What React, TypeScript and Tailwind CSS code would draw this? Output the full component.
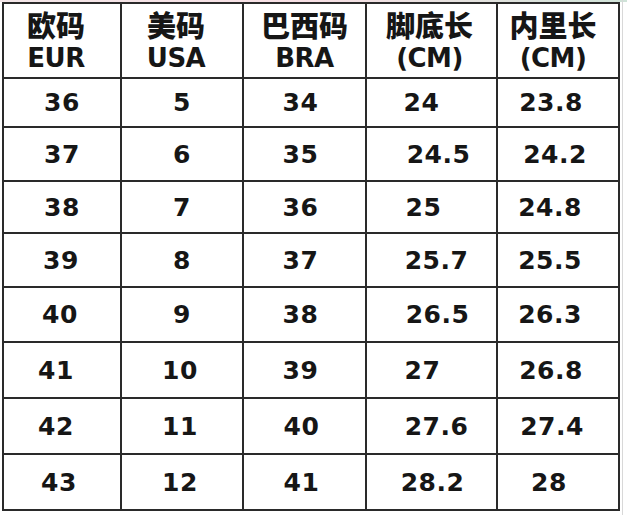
const headers: [string, string, string][] = [
  ["欧码", "EUR", "-translate-x-[6px]"],
  ["美码", "USA", "-translate-x-[6px]"],
  ["巴西码", "BRA", ""],
  ["脚底长", "(CM)", "-translate-x-[2px]"],
  ["内里长", "(CM)", "-translate-x-[5px]"],
];

const rows: string[][] = [
  ["36", "5", "34", "24", "23.8"],
  ["37", "6", "35", "24.5", "24.2"],
  ["38", "7", "36", "25", "24.8"],
  ["39", "8", "37", "25.7", "25.5"],
  ["40", "9", "38", "26.5", "26.3"],
  ["41", "10", "39", "27", "26.8"],
  ["42", "11", "40", "27.6", "27.4"],
  ["43", "12", "41", "28.2", "28"],
];

// row heights taken from the grid lines of the chart
const rowHeights = ["h-[49px]", "h-[54px]", "h-[52px]", "h-[54px]", "h-[55px]", "h-[56px]", "h-[56px]", "h-[56px]"];

// the numbers in the chart are not quite centred in their cells
const shifts: string[][] = [
  ["", "", "-translate-x-[4px]", "-translate-x-[10px]", "-translate-x-[7px]"],
  ["", "", "-translate-x-[4px]", "translate-x-[7px]", "-translate-x-[3px]"],
  ["", "", "-translate-x-[4px]", "-translate-x-[8px]", "-translate-x-[8px]"],
  ["-translate-x-[1px]", "", "-translate-x-[4px]", "translate-x-[5px]", "-translate-x-[8px]"],
  ["-translate-x-[2px]", "", "-translate-x-[4px]", "translate-x-[6px]", "-translate-x-[8px]"],
  ["-translate-x-[6px]", "-translate-x-[2px]", "-translate-x-[4px]", "-translate-x-[9px]", "-translate-x-[7px]"],
  ["-translate-x-[6px]", "-translate-x-[2px]", "-translate-x-[3px]", "translate-x-[5px]", "-translate-x-[6px]"],
  ["-translate-x-[3px]", "-translate-x-[2px]", "-translate-x-[3px]", "translate-x-[1px]", "-translate-x-[9px]"],
];

const cell = "flex items-center justify-center border-r-2 border-b-2 border-[#2a2a2a]";

export default function App() {
  return (
    <div className="w-[627px] h-[515px] bg-white relative overflow-hidden">
      <div className="h-[2px] bg-gradient-to-r from-[#f3e6e8] via-[#f7dfe4] to-[#cfe3d8]" />
      <div
        className="ml-[2px] grid grid-cols-[118px_122px_123px_131px_122px] w-fit border-l-2 border-t-2 border-[#2a2a2a] text-[#161616]"
        style={{ fontFamily: '"DejaVu Sans", "Noto Sans CJK SC", sans-serif' }}
      >
        {headers.map(([zh, en, shift], i) => (
          <div key={i} className={`${cell} h-[75px] flex-col gap-[6px]`}>
            <span
              className={`text-[29px] leading-none font-black ${shift}`}
              style={{ fontFamily: '"Noto Sans CJK SC", sans-serif' }}
            >
              {zh}
            </span>
            <span className={`text-[26px] leading-none font-bold tracking-[-0.5px] ${shift}`}>{en}</span>
          </div>
        ))}
        {rows.map((r, ri) =>
          r.map((v, ci) => (
            <div key={`${ri}-${ci}`} className={`${cell} ${rowHeights[ri]}`}>
              <span className={`text-[25px] font-bold leading-none tracking-[0.5px] ${shifts[ri][ci]}`}>{v}</span>
            </div>
          ))
        )}
      </div>
      <div className="absolute right-[4px] top-0 bottom-0 w-px bg-[#d8d8d8]" />
    </div>
  );
}
